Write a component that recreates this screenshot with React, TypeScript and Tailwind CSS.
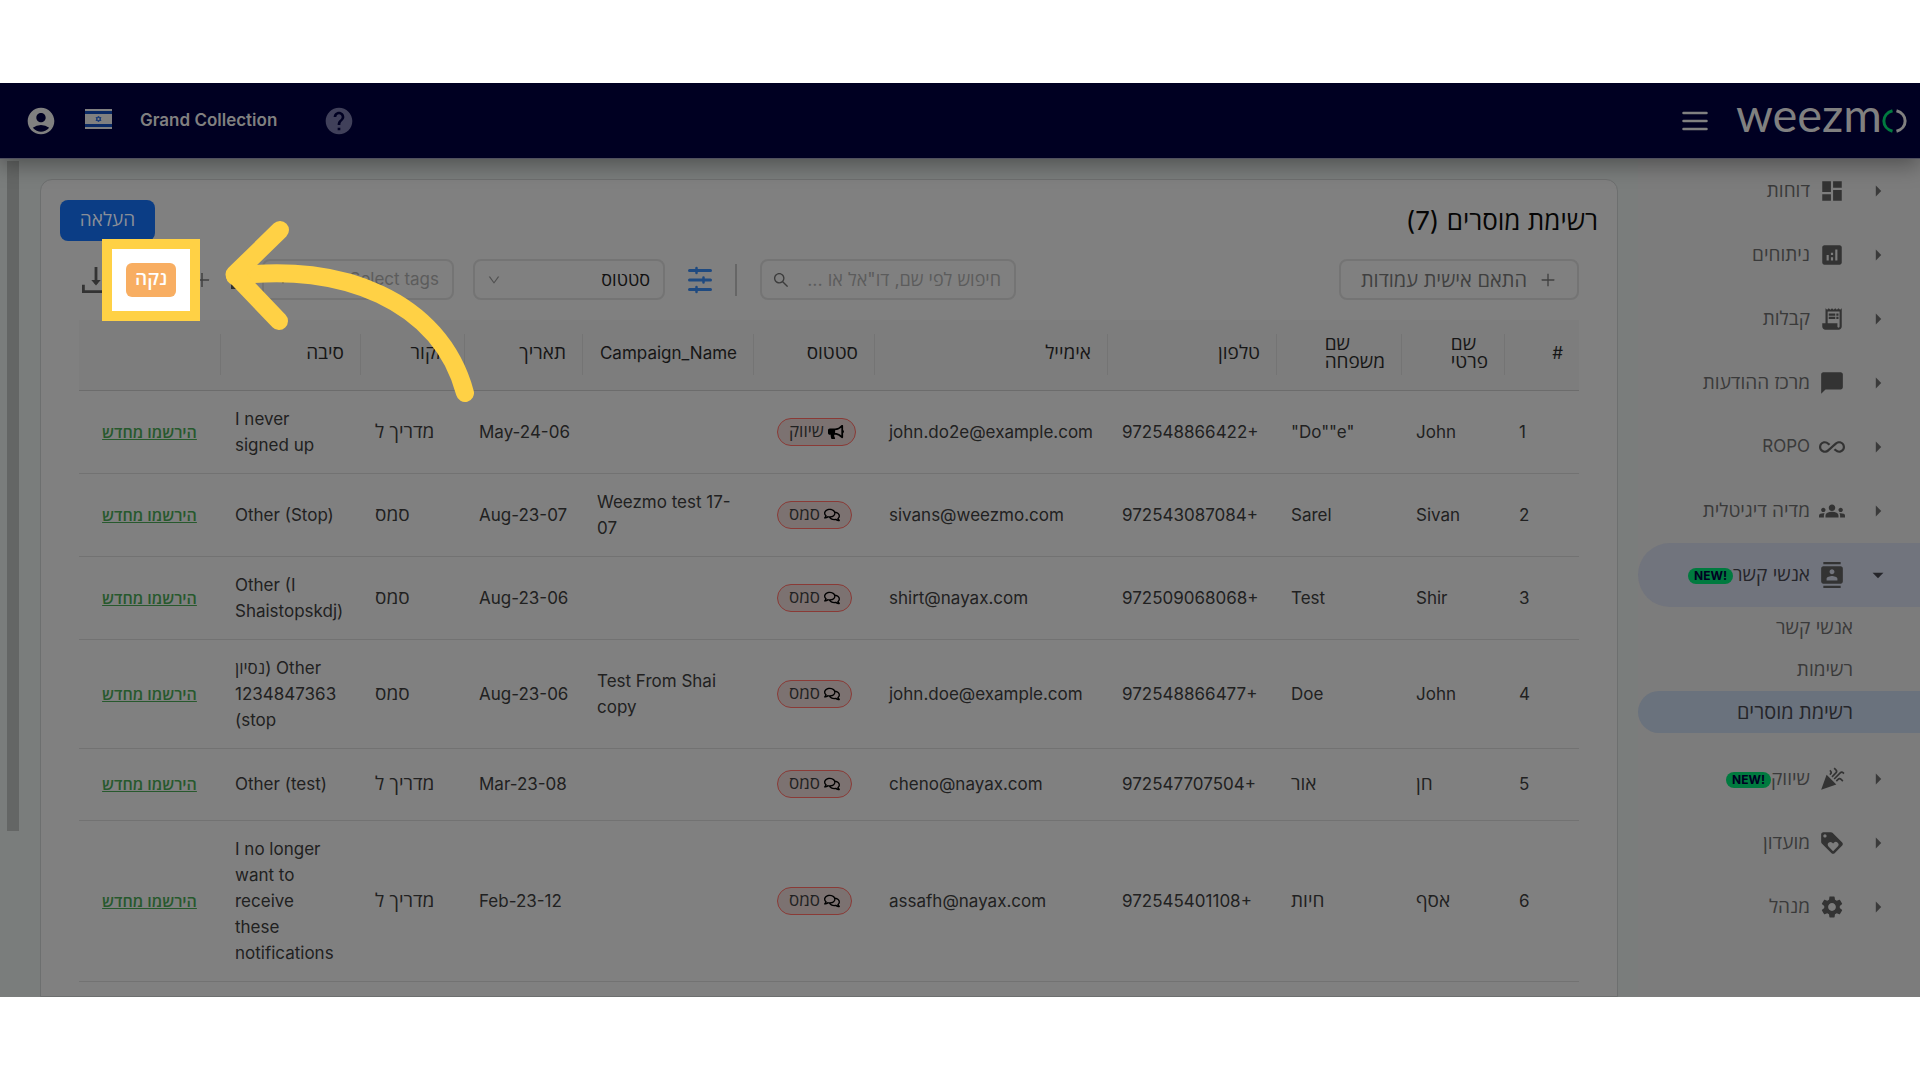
import React from 'react';
import {
  MdAccountCircle,
  MdArrowDropDown,
  MdArrowLeft,
  MdAnalytics,
  MdAllInclusive,
  MdCelebration,
  MdChatBubble,
  MdContacts,
  MdDashboard,
  MdGroups,
  MdHelp,
  MdLoyalty,
  MdReceiptLong,
  MdSettings,
} from 'react-icons/md';
import { FaBullhorn, FaRegComments } from 'react-icons/fa';
import { AiOutlineDown, AiOutlinePlus, AiOutlineSearch } from 'react-icons/ai';

interface NavItem {
  label: string;
  icon: React.ReactNode;
  isNew?: boolean;
  children?: string[];
}

interface Contact {
  id: number;
  firstName: string;
  lastName: string;
  phone: string;
  email: string;
  status: 'marketing' | 'sms';
  campaign: string;
  date: string;
  source: string;
  reason: string;
}

const navItems: NavItem[] = [
  { label: 'דוחות', icon: <MdDashboard /> },
  { label: 'ניתוחים', icon: <MdAnalytics /> },
  { label: 'קבלות', icon: <MdReceiptLong /> },
  { label: 'מרכז ההודעות', icon: <MdChatBubble /> },
  { label: 'ROPO', icon: <MdAllInclusive /> },
  { label: 'מדיה דיגיטלית', icon: <MdGroups /> },
  { label: 'אנשי קשר', icon: <MdContacts />, isNew: true, children: ['אנשי קשר', 'רשימות', 'רשימת מוסרים'] },
  { label: 'שיווק', icon: <MdCelebration />, isNew: true },
  { label: 'מועדון', icon: <MdLoyalty /> },
  { label: 'מנהל', icon: <MdSettings /> },
];

const contacts: Contact[] = [
  { id: 1, firstName: 'John', lastName: '"Do""e"', phone: '972548866422+', email: 'john.do2e@example.com', status: 'marketing', campaign: '', date: 'May-24-06', source: 'מדריך ל', reason: 'I never\nsigned up' },
  { id: 2, firstName: 'Sivan', lastName: 'Sarel', phone: '972543087084+', email: 'sivans@weezmo.com', status: 'sms', campaign: 'Weezmo test 17-\n07', date: 'Aug-23-07', source: 'סמס', reason: 'Other (Stop)' },
  { id: 3, firstName: 'Shir', lastName: 'Test', phone: '972509068068+', email: 'shirt@nayax.com', status: 'sms', campaign: '', date: 'Aug-23-06', source: 'סמס', reason: 'Other (I\nShaistopskdj)' },
  { id: 4, firstName: 'John', lastName: 'Doe', phone: '972548866477+', email: 'john.doe@example.com', status: 'sms', campaign: 'Test From Shai\ncopy', date: 'Aug-23-06', source: 'סמס', reason: 'נסיון) Other\n1234847363\n(stop' },
  { id: 5, firstName: 'חן', lastName: 'אור', phone: '972547707504+', email: 'cheno@nayax.com', status: 'sms', campaign: '', date: 'Mar-23-08', source: 'מדריך ל', reason: 'Other (test)' },
  { id: 6, firstName: 'אסף', lastName: 'חיות', phone: '972545401108+', email: 'assafh@nayax.com', status: 'sms', campaign: '', date: 'Feb-23-12', source: 'מדריך ל', reason: 'I no longer\nwant to\nreceive\nthese\nnotifications' },
];

const columns = [
  { title: '#', width: 'w-[75px]' },
  { title: 'שם\nפרטי', width: 'w-[103px]' },
  { title: 'שם\nמשפחה', width: 'w-[125px]' },
  { title: 'טלפון', width: 'w-[169px]' },
  { title: 'אימייל', width: 'w-[233px]' },
  { title: 'סטטוס', width: 'w-[121px]' },
  { title: 'Campaign_Name', width: 'w-[171px]' },
  { title: 'תאריך', width: 'w-[118px]' },
  { title: 'מקור', width: 'w-[104px]' },
  { title: 'סיבה', width: 'w-[140px]' },
  { title: '', width: 'w-[141px]' },
];

// Hebrew glyphs come out smaller than Latin ones, so they get a larger size
const textSize = (text: string) => (/^[\u0590-\u05ff\s]+$/.test(text) ? 'text-[19px]' : 'text-[17px]');

const Logo: React.FC = () => (
  <a href="#home" dir="ltr" className="flex items-center text-[#808080]" aria-label="weezmo">
    <span className="-mt-3 font-['Lato',sans-serif] text-[47px] leading-[47px]">weezm</span>
    <svg viewBox="0 0 26 24" className="h-6 w-[26px]" fill="none" strokeWidth="3">
      <path d="M10.500 1.800C-1 5-1 19 10.500 22.200" stroke="#007a3f" />
      <path d="M14.500 1.800C26 5 26 19 14.500 22.200" stroke="#808080" />
    </svg>
  </a>
);

const IsraelFlag: React.FC = () => (
  <svg viewBox="0 0 27 20" className="h-5 w-[27px]">
    <rect width="27" height="20" fill="#808080" />
    <rect y="2" width="27" height="3" fill="#0a2a66" />
    <rect y="15" width="27" height="3" fill="#0a2a66" />
    <path d="M13.500 7 16 11.500H11ZM13.500 13 11 8.500H16Z" fill="none" stroke="#1d3d78" />
  </svg>
);

const Header: React.FC = () => (
  <header className="relative z-10 flex h-[76px] shrink-0 items-center justify-between border-b border-[#50505f] bg-[#000022] pr-3 pl-7 shadow-[0_6px_20px_rgba(0,0,0,0.35)]">
    <div className="flex items-center gap-7">
      <Logo />
      <button type="button" aria-label="תפריט">
        <svg viewBox="0 0 26 20" className="h-5 w-[26px]" stroke="#808080" strokeWidth="2.500" strokeLinecap="round">
          <path d="M1.500 2h23M1.500 10h23M1.500 18h23" />
        </svg>
      </button>
    </div>
    <div dir="ltr" className="flex items-center">
      <button type="button" aria-label="חשבון">
        <MdAccountCircle className="-m-[3px] size-8 text-[#808080]" />
      </button>
      <span className="mb-1 ml-[31px]">
        <IsraelFlag />
      </span>
      <span className="ml-7 text-[17px] font-semibold text-[#808080]">Grand Collection</span>
      <button type="button" aria-label="עזרה" className="ml-[46px]">
        <MdHelp className="size-8 text-[#40405a]" />
      </button>
    </div>
  </header>
);

const NewBadge: React.FC = () => (
  <span dir="ltr" className="mt-0.5 flex h-4 w-[45px] items-center justify-center rounded-full bg-[#007a3f] text-xs font-bold text-[#000022]">
    NEW!
  </span>
);

const Sidebar: React.FC = () => (
  <nav className="w-[282px] shrink-0 bg-[#7c7c7c] text-[#3a3a3a]">
    {navItems.map((item) => (
      <div key={item.label} className={item.children ? 'mb-[14px]' : ''}>
        <a
          href="#nav"
          className={`flex h-16 items-center rounded-l-full pr-[26px] ${item.children ? 'bg-[#71747d] text-[#25252a]' : ''}`}
        >
          <span className="flex w-8 justify-center text-[26px]">{item.children ? <MdArrowDropDown /> : <MdArrowLeft className="rotate-180" />}</span>
          <span className="mr-4 flex w-7 justify-center text-[26px] text-[#333333]">{item.icon}</span>
          <span className={`mr-2 ${textSize(item.label)}`}>{item.label}</span>
          {item.isNew && <NewBadge />}
        </a>
        {item.children?.map((child, index) => (
          <a
            key={child}
            href="#list"
            className={`flex h-[42px] items-center rounded-l-full pr-[67px] ${index === 2 ? 'bg-[#6a727d] text-[20px] font-medium text-[#25252a]' : 'text-[19px]'}`}
          >
            {child}
          </a>
        ))}
      </div>
    ))}
  </nav>
);

const DownloadIcon: React.FC = () => (
  <svg viewBox="0 0 30 30" className="h-[30px] w-7" fill="none" stroke="#333333" strokeWidth="3">
    <path d="M1.500 20v7.500h27V20M15 1v18" />
    <path d="M10 15h10l-5 6z" fill="#333333" stroke="none" />
  </svg>
);

const TrayIcon: React.FC = () => (
  <svg viewBox="0 0 18 30" className="h-[30px] w-[18px]" fill="none" stroke="#333333" strokeWidth="3">
    <path d="M4.500 17v5.500H16V17" />
  </svg>
);

const SlidersIcon: React.FC = () => (
  <svg viewBox="0 0 24 28" className="h-7 w-6" stroke="#1f4a80" strokeWidth="3" strokeLinecap="round">
    <path d="M1.500 4.500h21M1.500 14h21M1.500 23.500h21" />
    <path d="M8.500 2v5M15.500 11.500v5M8.500 21v5" strokeWidth="2.500" />
  </svg>
);

const Select: React.FC<{ label: string; className: string }> = ({ label, className }) => (
  <div className="relative w-[192px]">
    <select aria-label={label} className={`h-[41px] w-full appearance-none rounded-lg border-2 border-[#747474] px-[13px] ${className}`}>
      <option>{label}</option>
    </select>
    <AiOutlineDown className="pointer-events-none absolute top-3.5 left-[14px] size-3.5 text-[#505050]" />
  </div>
);

const Toolbar: React.FC = () => (
  <div className="mt-[18px] flex h-[41px] items-center justify-between pr-[38px] pl-[41px]">
    <button type="button" className="flex h-[41px] items-center gap-3 rounded-lg border-2 border-[#747474] px-5 text-[20px] text-[#404040]">
      <AiOutlinePlus className="size-[18px]" />
      התאם אישית עמודות
    </button>
    <div className="flex items-center gap-[23px]">
      <div className="relative">
        <input
          type="search"
          aria-label="חיפוש"
          placeholder="חיפוש לפי שם, דו&quot;אל או ..."
          className="h-[41px] w-64 rounded-lg border-2 border-[#747474] px-[13px] text-[18px] placeholder:text-[#5c5c5c]"
        />
        <AiOutlineSearch className="absolute top-3 left-3 size-[18px] text-[#3c3c3c]" />
      </div>
      <span className="h-8 w-0.5 bg-[#666666]" />
      <button type="button" aria-label="סינון">
        <SlidersIcon />
      </button>
      <div className="flex items-center gap-[19px]">
        <Select label="סטטוס" className="text-[18px] text-[#111111]" />
        <div className="flex items-center gap-4">
          <Select label="Select tags" className="text-[17px] text-[#5c5c5c]" />
          <button type="button" aria-label="שמירה">
            <TrayIcon />
          </button>
          <button type="button" aria-label="הוספה">
            <AiOutlinePlus className="size-5 text-[#404040]" />
          </button>
          <div className="relative z-20">
            <span className="absolute -inset-x-6 -inset-y-6 border-[10px] border-[#ffd145] bg-white" />
            <button type="button" className="relative block h-[34px] w-[50px] rounded-md bg-[#f8ae62] text-[19px] font-semibold text-white">
              נקה
            </button>
          </div>
          <button type="button" aria-label="הורדה">
            <DownloadIcon />
          </button>
        </div>
      </div>
    </div>
  </div>
);

const StatusTag: React.FC<{ status: Contact['status'] }> = ({ status }) => (
  <span dir="rtl" className="ml-[9px] inline-flex h-7 items-center gap-1 rounded-full border border-[#8a3a36] bg-[#7c7271] px-[11px] align-middle text-[17px]">
    {status === 'marketing' ? <FaBullhorn className="size-4 text-black" /> : <FaRegComments className="size-4 text-black" />}
    {status === 'marketing' ? 'שיווק' : 'סמס'}
  </span>
);

const Cell: React.FC<{ children: string | number }> = ({ children }) => (
  <td dir="ltr" className={`p-[15px] whitespace-pre ${textSize(String(children))} leading-[26px]`}>
    {children}
  </td>
);

const ContactsTable: React.FC = () => (
  <div className="mt-5 px-[38px]">
    <table className="w-full table-fixed border-collapse">
      <thead className="bg-[#7d7d7d]">
        <tr className="h-[70px] border-b border-[#6c6c6c]">
          {columns.map((column, index) => (
            <th key={index} className={`${column.width} p-0 font-normal text-[#161616]`}>
              <div className={`flex h-[41px] items-center px-4 whitespace-pre-line ${index < 10 ? 'border-l border-[#747474]' : ''}`}>
                <span className={`pb-1 text-left ${textSize(column.title)} leading-[18px]`}>{column.title}</span>
              </div>
            </th>
          ))}
        </tr>
      </thead>
      <tbody className="text-[#212121]">
        {contacts.map((contact) => (
          <tr key={contact.id} className="h-[72px] border-b border-[#727272] text-left">
            <Cell>{contact.id}</Cell>
            <Cell>{contact.firstName}</Cell>
            <Cell>{contact.lastName}</Cell>
            <Cell>{contact.phone}</Cell>
            <Cell>{contact.email}</Cell>
            <td dir="ltr" className="px-[15px]">
              <StatusTag status={contact.status} />
            </td>
            <Cell>{contact.campaign}</Cell>
            <Cell>{contact.date}</Cell>
            <Cell>{contact.source}</Cell>
            <Cell>{contact.reason}</Cell>
            <td className="text-center">
              <a href="#resubscribe" className="text-[16px] font-semibold whitespace-nowrap text-[#27592d] underline">
                הירשמו מחדש
              </a>
            </td>
          </tr>
        ))}
      </tbody>
    </table>
  </div>
);

const PointerArrow: React.FC = () => (
  <svg
    viewBox="224 220 252 184"
    className="pointer-events-none absolute top-[137px] left-[224px] z-30 h-[184px] w-[252px]"
    fill="none"
    stroke="#ffd145"
    strokeWidth="18"
    strokeLinecap="round"
    strokeLinejoin="round"
  >
    <path d="M235 276C340 262 440 300 465 393" />
    <path d="M280 230 234.500 274.500 279 321" />
  </svg>
);

const App: React.FC = () => {
  return (
    <div dir="rtl" className="flex h-screen flex-col bg-white py-[83px] font-['Inter','Open_Sans','Noto_Sans',sans-serif]">
      <div className="relative flex min-h-0 flex-1 flex-col overflow-hidden bg-[#7a7d7c]">
        <Header />
        <div className="flex min-h-0 flex-1">
          <Sidebar />
          <main className="mr-5 min-w-0 flex-1 pt-5">
            <section className="min-h-full rounded-t-xl border border-[#6d6f6f] bg-[#808080] pt-5">
              <div className="flex h-[41px] items-center justify-between px-[19px]">
                <h1 className="text-[26px] text-[#050505]">רשימת מוסרים (7)</h1>
                <button type="button" className="h-[41px] w-[95px] rounded-lg bg-[#0b3d85] text-[19px] text-[#8a8f98]">
                  העלאה
                </button>
              </div>
              <Toolbar />
              <ContactsTable />
            </section>
          </main>
          <div className="w-10 shrink-0 pr-[21px] pl-[7px]">
            <div className="mt-0.5 h-[670px] bg-[#646665]" />
          </div>
        </div>
        <PointerArrow />
      </div>
    </div>
  );
};

export default App;
